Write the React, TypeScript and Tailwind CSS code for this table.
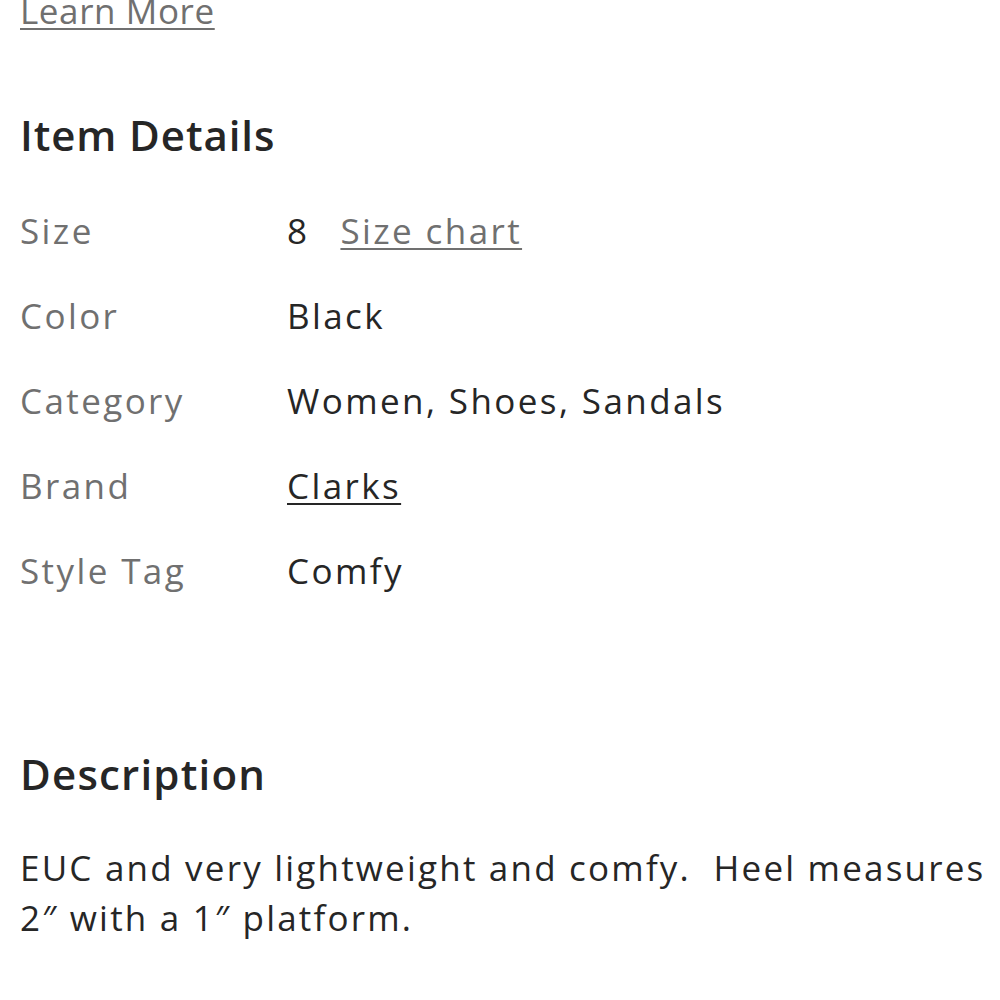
import React from "react";

const details = [
  { label: "Size", value: "8", extra: "Size chart" },
  { label: "Color", value: "Black" },
  { label: "Category", value: "Women, Shoes, Sandals" },
  { label: "Brand", value: "Clarks", link: true },
  { label: "Style Tag", value: "Comfy" },
];

export default function App() {
  return (
    <div className="h-[1000px] w-[1000px] overflow-hidden bg-white px-[20px] font-['Open_Sans',sans-serif]">
      <a className="mt-[-14px] block text-[35px] leading-[50px] tracking-[0.6px] text-[#707070] underline decoration-[2px] underline-offset-[4px]">
        Learn More
      </a>

      <h2 className="mt-[74px] text-[42px] font-semibold leading-[50px] tracking-[0.9px] text-[#262626]">
        Item Details
      </h2>

      <div className="mt-[46px] grid grid-cols-[267px_1fr] text-[35px] tracking-[2.4px]">
        {details.map((d) => (
          <React.Fragment key={d.label}>
            <div className="h-[85px] leading-[50px] text-[#707070]">{d.label}</div>
            <div className="h-[85px] leading-[50px] text-[#262626]">
              {d.link ? (
                <a className="underline decoration-[2px] underline-offset-[4px]">{d.value}</a>
              ) : (
                d.value
              )}
              {d.extra && (
                <a className="ml-[31px] text-[#707070] underline decoration-[2px] underline-offset-[4px]">
                  {d.extra}
                </a>
              )}
            </div>
          </React.Fragment>
        ))}
      </div>

      <h2 className="mt-[118px] text-[42px] font-semibold leading-[50px] tracking-[1.2px] text-[#262626]">
        Description
      </h2>

      <p className="mr-[-20px] mt-[44px] whitespace-pre-wrap text-[35px] leading-[50px] tracking-[2.2px] text-[#262626]">
        {"EUC and very lightweight and comfy.  Heel measures 2\u2033 with a 1\u2033 platform."}
      </p>
    </div>
  );
}
